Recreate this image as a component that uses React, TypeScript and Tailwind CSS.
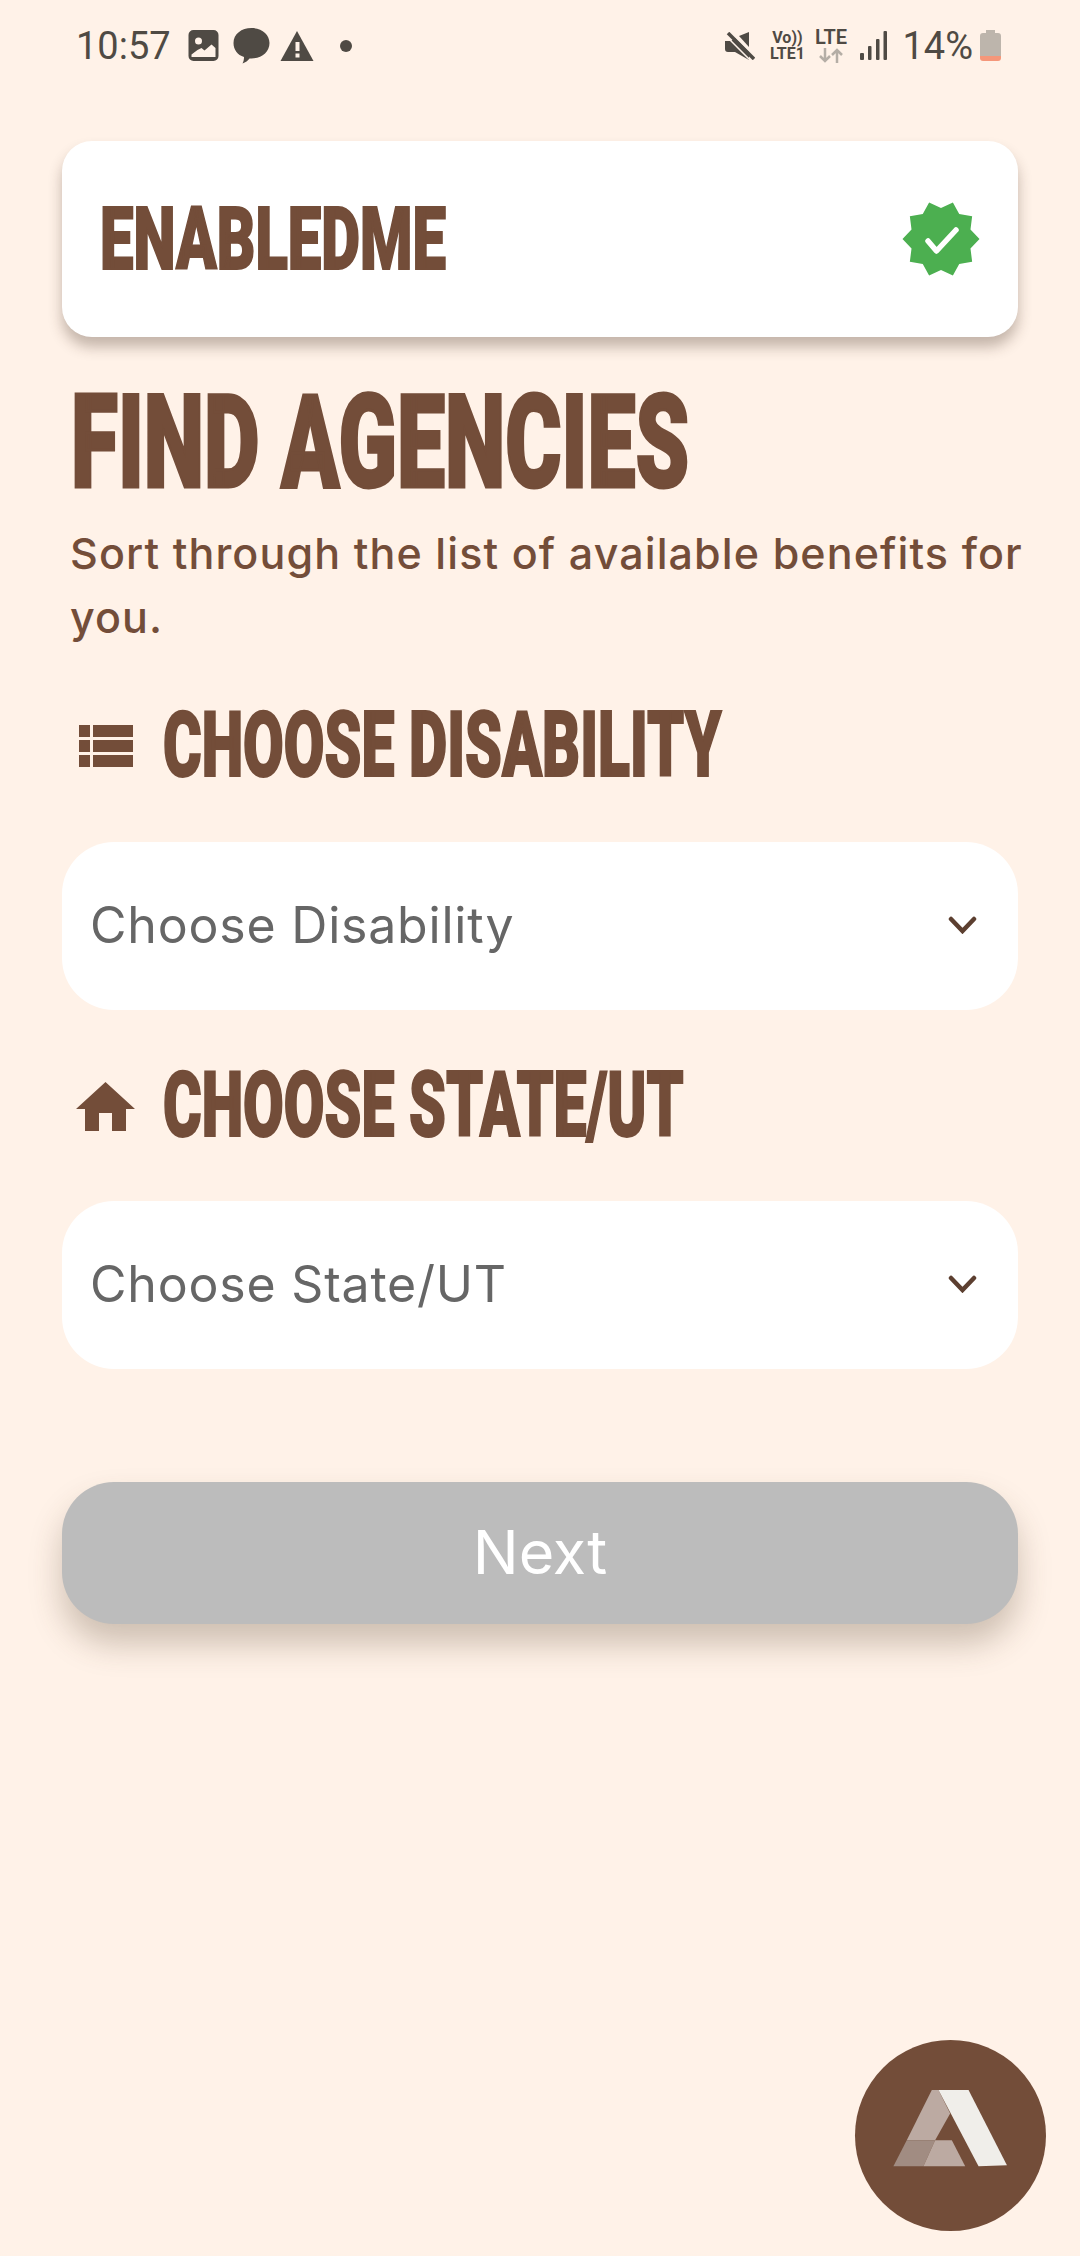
const brown = "#734d39"

const badgePoints = Array.from({ length: 20 }, (_, i) => {
  const r = i % 2 === 0 ? 38.500 : 31
  const a = (i * Math.PI) / 10 - Math.PI / 2 + Math.PI / 10
  return `${40 + r * Math.cos(a)},${40 + r * Math.sin(a)}`
}).join(" ")

const StatusBar = () => (
  <div className="flex h-[90px] items-center pl-[76px] pr-[79px] pt-[1px] text-[#4f4a44] [font-family:Roboto,sans-serif]">
    <span className="w-[95px] text-[38px] leading-none">10:57</span>
    <svg viewBox="0 0 30 31" className="ml-[17px] h-[31px] w-[31px]" fill="#4f4a44">
      <path fillRule="evenodd" d="M5 0h20a5 5 0 0 1 5 5v21a5 5 0 0 1-5 5H5a5 5 0 0 1-5-5V5a5 5 0 0 1 5-5Zm5 7.500a3.500 3.500 0 1 0 0 7 3.500 3.500 0 0 0 0-7ZM3 24.500V27h24v-9l-4-3.500-7 6-3-2.500-4 2-6 4.500Z" />
    </svg>
    <svg viewBox="0 0 36 36" className="ml-[14px] h-[36px] w-[37px]" fill="#4f4a44">
      <path d="M18 0c10 0 18 6 18 15s-8 15.500-18 15.500c-.8 0-1.500 0-2 0-1.500 2-4 4-7 5 1-2 1.500-4 1.500-6.500C4 27 0 21.500 0 15 0 6 8 0 18 0Z" />
    </svg>
    <svg viewBox="0 0 33 30" className="ml-[10px] h-[30px] w-[34px]">
      <path d="M16.500 0 33 30H0Z" fill="#4f4a44" />
      <rect x="15" y="11" width="4" height="9" fill="#fff2e8" />
      <rect x="15" y="22.500" width="4" height="4" fill="#fff2e8" />
    </svg>
    <span className="ml-[26px] h-[12px] w-[12px] rounded-full bg-[#4f4a44]" />

    <div className="ml-auto flex items-center">
      <svg viewBox="0 0 30 28" className="h-[28px] w-[30px]" fill="#4f4a44">
        <path d="M0 9h6l4-3 14 14v8L10 20H3a3 3 0 0 1-3-3Z" />
        <path d="M14 4l10-4v15Z" />
        <path d="M3 1 29 27" stroke="#4f4a44" strokeWidth="3.500" />
        <path d="M0 3 26 29" stroke="#fff2e8" strokeWidth="1.500" />
      </svg>
      <div className="ml-[13px] flex w-[38px] flex-col items-center text-[16px] font-bold leading-[16px]">
        <span>Vo))</span>
        <span>LTE1</span>
      </div>
      <div className="ml-[8px] flex w-[33px] flex-col items-center">
        <span className="text-[20px] font-semibold leading-[19px]">LTE</span>
        <svg viewBox="0 0 24 15" className="mt-[1px] h-[15px] w-[24px]" fill="none" stroke="#b5aea6" strokeWidth="2.500">
          <path d="M6 0v13M1 8l5 5 5-5M18 15V2M13 7l5-5 5 5" />
        </svg>
      </div>
      <svg viewBox="0 0 27 29" className="ml-[13px] h-[29px] w-[27px]" fill="#4f4a44">
        <rect x="0" y="22" width="4" height="7" rx="1" />
        <rect x="8" y="15" width="3.500" height="14" rx="1" />
        <rect x="16" y="8" width="3.500" height="21" rx="1" />
        <rect x="23.500" y="0" width="3.500" height="29" rx="1" />
      </svg>
      <span className="ml-[15px] text-[38px] leading-none">14%</span>
      <svg viewBox="0 0 21 31" className="ml-[7px] h-[31px] w-[21px]">
        <path d="M6 0h9v3h3a3 3 0 0 1 3 3v20H0V6a3 3 0 0 1 3-3h3Z" fill="#bdb5ac" />
        <path d="M0 26h21v2a3 3 0 0 1-3 3H3a3 3 0 0 1-3-3Z" fill="#f5977a" />
      </svg>
    </div>
  </div>
)

const Select = ({ label }: { label: string }) => (
  <div className="flex h-[168px] items-center justify-between rounded-[52px] bg-white pb-[2px] pl-[28px] pr-[41px]">
    <span className="text-[50px] leading-none tracking-[0.8px] text-[#666666] [font-family:Inter,sans-serif]">{label}</span>
    <svg viewBox="0 0 29 18" className="h-[18px] w-[29px]" fill="none" stroke="#5c3f30" strokeWidth="4.500" strokeLinecap="round">
      <path d="M3 3l11.500 12L26 3" />
    </svg>
  </div>
)

const App = () => {
  return (
    <div className="relative h-[2256px] w-[1080px] overflow-hidden bg-[#fff2e8]">
      <StatusBar />

      <div className="flex flex-col px-[62px] pt-[51px]">
        <div className="flex h-[196px] items-center justify-between rounded-[30px] bg-white pl-[38px] pr-[37px] shadow-[0_10px_14px_rgba(60,40,25,0.3)]">
          <span className="origin-left scale-x-[0.68] text-[88px] font-black leading-none text-[#734d39] [font-family:Roboto,sans-serif] [-webkit-text-stroke:2px_#734d39]">
            ENABLEDME
          </span>
          <svg viewBox="0 0 80 80" className="h-[80px] w-[80px]">
            <polygon points={badgePoints} fill="#4caf50" />
            <path d="M27 42l8.500 10L55 31" fill="none" stroke="#fff" strokeWidth="5.500" strokeLinecap="round" strokeLinejoin="round" />
          </svg>
        </div>

        <h1 className="mt-[53px] ml-[9px] h-[106px] origin-left scale-x-[0.665] whitespace-nowrap text-[129px] font-black leading-[106px] text-[#734d39] [font-family:Roboto,sans-serif] [-webkit-text-stroke:3px_#734d39]">
          FIND AGENCIES
        </h1>

        <p className="ml-[8px] mt-[25px] w-[960px] text-[43px] font-medium leading-[64px] tracking-[1.1px] text-[#734d39] [font-family:Inter,sans-serif]">
          Sort through the list of available benefits for you.
        </p>

        <div className="ml-[17px] mt-[61px] flex h-[72px] items-center">
          <svg viewBox="0 0 54 42" className="h-[42px] w-[54px]" fill={brown}>
            <rect x="0" y="0" width="11" height="12" />
            <rect x="14" y="0" width="40" height="12" />
            <rect x="0" y="15" width="11" height="12" />
            <rect x="14" y="15" width="40" height="12" />
            <rect x="0" y="30" width="11" height="12" />
            <rect x="14" y="30" width="40" height="12" />
          </svg>
          <span className="ml-[30px] origin-left scale-x-[0.655] whitespace-nowrap text-[90px] font-black leading-none text-[#734d39] [font-family:Roboto,sans-serif] [-webkit-text-stroke:2px_#734d39]">
            CHOOSE DISABILITY
          </span>
        </div>

        <div className="mt-[60px]">
          <Select label="Choose Disability" />
        </div>

        <div className="ml-[14px] mt-[60px] flex h-[72px] items-center">
          <svg viewBox="0 0 59 49" className="h-[49px] w-[59px]" fill={brown}>
            <path d="M29.500 0 59 27H50V49H36V31H23V49H9V27H0Z" />
          </svg>
          <span className="ml-[28px] origin-left scale-x-[0.655] whitespace-nowrap text-[90px] font-black leading-none text-[#734d39] [font-family:Roboto,sans-serif] [-webkit-text-stroke:2px_#734d39]">
            CHOOSE STATE/UT
          </span>
        </div>

        <div className="mt-[59px]">
          <Select label="Choose State/UT" />
        </div>

        <button className="mt-[113px] flex h-[142px] items-center justify-center rounded-[52px] bg-[#bcbcbc] pb-[2px] text-[61px] leading-none text-white shadow-[0_20px_32px_rgba(80,60,40,0.28)] [font-family:Inter,sans-serif]">
          Next
        </button>
      </div>

      <div className="absolute left-[855px] top-[2040px] h-[191px] w-[191px] rounded-full bg-[#734d39]">
        <svg viewBox="0 0 572 572" className="h-full w-full blur-[0.6px]">
          <polygon points="230,150 250,150 285,220 240,300 155,300" fill="#bcaaa2" />
          <polygon points="155,300 240,300 205,378 115,378" fill="#a18c82" />
          <polygon points="240,300 290,300 330,378 205,378" fill="#bcaaa2" />
          <polygon points="250,150 340,150 455,375 370,378" fill="#f0eeea" />
        </svg>
      </div>
    </div>
  )
}

export default App
